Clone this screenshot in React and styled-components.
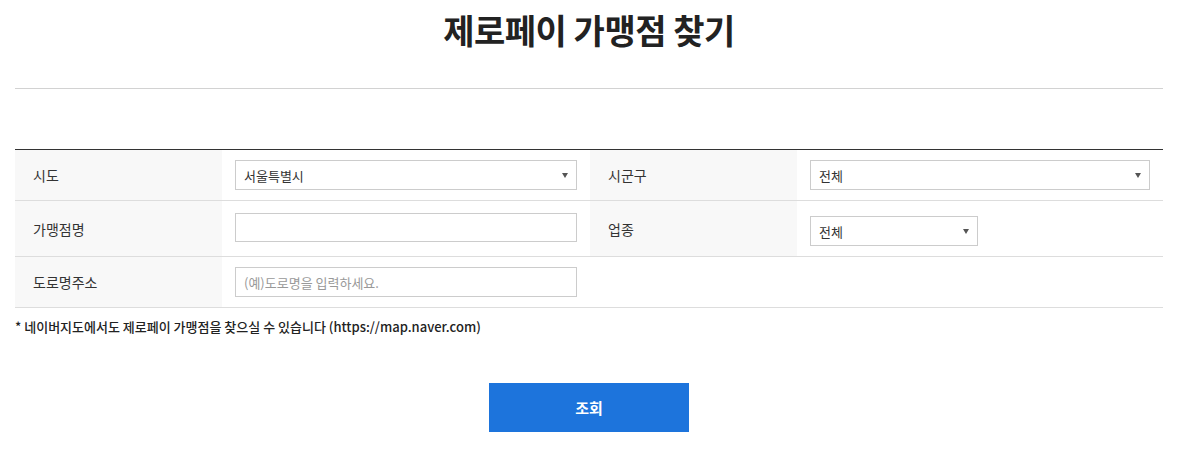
import React from "react";
import styled, { createGlobalStyle } from "styled-components";

const Global = createGlobalStyle`
  html, body { margin: 0; padding: 0; background: #fff; }
  body { font-family: "Noto Sans CJK KR", "Noto Sans", sans-serif; color: #333; }
  * { box-sizing: border-box; }
`;

const Page = styled.div`
  width: 1148px;
  margin-left: 15px;
`;

const Title = styled.h2`
  margin: 0;
  height: 89px;
  padding-top: 8px;
  text-align: center;
  font-size: 34px;
  line-height: 44px;
  font-weight: 700;
  color: #222;
  border-bottom: 1px solid #d2d2d2;
  letter-spacing: -0.5px;
`;

const Table = styled.div`
  margin-top: 60px;
  border-top: 1px solid #333;
`;

const Row = styled.div`
  display: grid;
  grid-template-columns: 207px 368px 207px 1fr;
  height: ${(p) => p.$h}px;
  border-bottom: 1px solid #ddd;
`;

const Label = styled.div`
  display: flex;
  align-items: center;
  padding-left: 18px;
  background: #f8f8f8;
  font-size: 14px;
  color: #333;
`;

const Field = styled.div`
  display: flex;
  align-items: ${(p) => (p.$top ? "flex-start" : "center")};
  padding: ${(p) => (p.$top ? `${p.$top}px 13px 0 13px` : "0 13px")};
  background: #fff;
`;

const Empty = styled.div`
  grid-column: span 2;
  background: #fff;
`;

const SelectBox = styled.div`
  position: relative;
  width: ${(p) => (p.$w ? `${p.$w}px` : "100%")};
  height: ${(p) => p.$h || 30}px;
  border: 1px solid #ccc;
  background: #fff;
  display: flex;
  align-items: center;
  padding-left: 8px;
  font-size: 13px;
  color: #333;
`;

const Arrow = styled.span`
  position: absolute;
  right: 8px;
  top: 50%;
  margin-top: -2px;
  width: 0;
  height: 0;
  border-left: 3px solid transparent;
  border-right: 3px solid transparent;
  border-top: 5px solid #555;
`;

const TextInput = styled.input`
  width: 100%;
  height: ${(p) => p.$h || 30}px;
  border: 1px solid #ccc;
  padding: 0 8px;
  font-family: inherit;
  font-size: 13px;
  color: #333;
  outline: none;
  &::placeholder { color: #999; }
`;

const Note = styled.p`
  margin: 10px 0 0;
  font-size: 13px;
  line-height: 18px;
  color: #222;
  font-weight: 500;
`;

const ButtonWrap = styled.div`
  display: flex;
  justify-content: center;
  margin-top: 47px;
`;

const SearchButton = styled.button`
  width: 200px;
  height: 49px;
  border: 0;
  background: #1d74dc;
  color: #fff;
  font-family: inherit;
  font-size: 15px;
  font-weight: 700;
  cursor: pointer;
`;

function Select({ value, w }) {
  return (
    <SelectBox $w={w}>
      {value}
      <Arrow />
    </SelectBox>
  );
}

export default function App() {
  return (
    <>
      <Global />
      <Page>
        <Title>제로페이 가맹점 찾기</Title>
        <Table>
          <Row $h={51}>
            <Label>시도</Label>
            <Field>
              <Select value="서울특별시" />
            </Field>
            <Label>시군구</Label>
            <Field>
              <Select value="전체" />
            </Field>
          </Row>
          <Row $h={56}>
            <Label>가맹점명</Label>
            <Field $top={12}>
              <TextInput $h={29} />
            </Field>
            <Label>업종</Label>
            <Field $top={15}>
              <Select value="전체" w={168} />
            </Field>
          </Row>
          <Row $h={51}>
            <Label>도로명주소</Label>
            <Field $top={10}>
              <TextInput placeholder="(예)도로명을 입력하세요." />
            </Field>
            <Empty />
          </Row>
        </Table>
        <Note>* 네이버지도에서도 제로페이 가맹점을 찾으실 수 있습니다 (https://map.naver.com)</Note>
        <ButtonWrap>
          <SearchButton>조회</SearchButton>
        </ButtonWrap>
      </Page>
    </>
  );
}
